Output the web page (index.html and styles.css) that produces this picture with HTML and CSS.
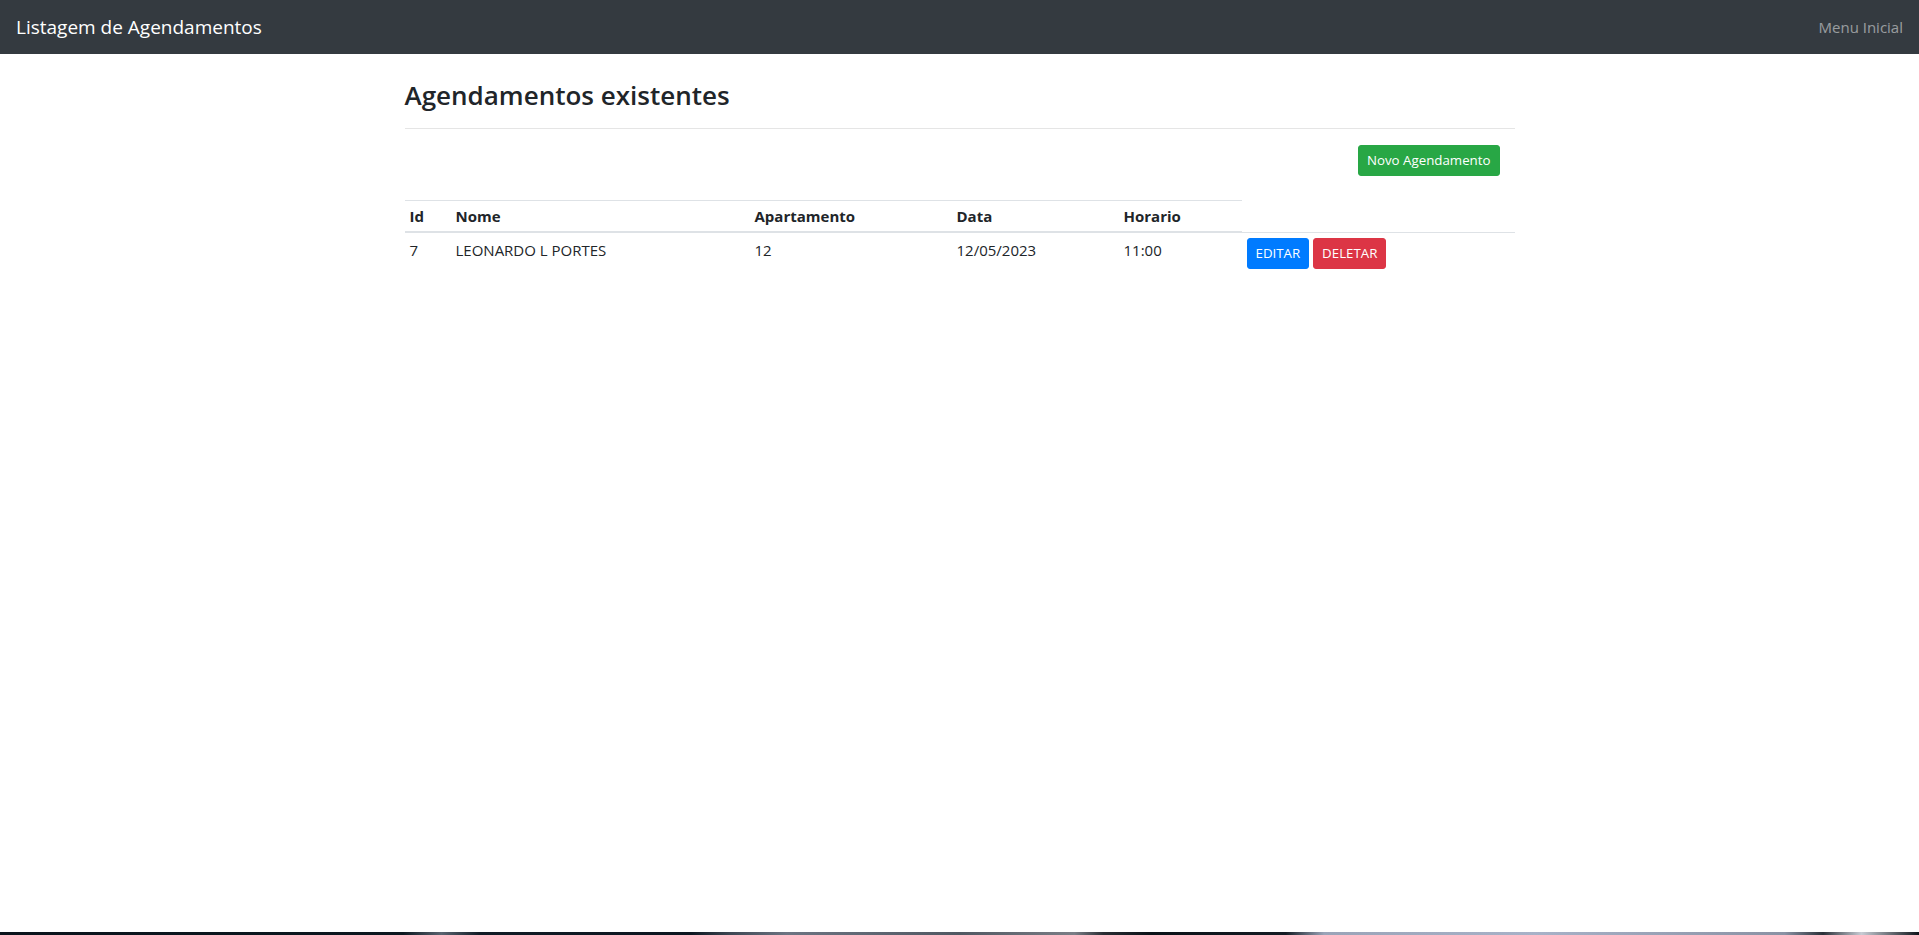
FILE: index.html
```html
<!DOCTYPE html>
<html lang="pt-BR">
<head>
<meta charset="utf-8">
<title>Listagem de Agendamentos</title>
<link rel="stylesheet" href="styles.css">
</head>
<body>
<nav class="navbar">
  <a class="brand" href="#">Listagem de Agendamentos</a>
  <a class="nav-link" href="#">Menu Inicial</a>
</nav>
<main class="page">
  <div class="container">
    <h3 class="title">Agendamentos existentes</h3>
    <hr class="divider">
    <div class="toolbar">
      <a class="btn btn-sm btn-success" href="#">Novo Agendamento</a>
    </div>
    <table class="table">
      <colgroup>
        <col class="c-id"><col class="c-nome"><col class="c-apto"><col class="c-data"><col class="c-hora"><col class="c-acoes">
      </colgroup>
      <thead>
        <tr>
          <th>Id</th>
          <th>Nome</th>
          <th>Apartamento</th>
          <th>Data</th>
          <th>Horario</th>
        </tr>
      </thead>
      <tbody>
        <tr>
          <td>7</td>
          <td>LEONARDO L PORTES</td>
          <td>12</td>
          <td>12/05/2023</td>
          <td>11:00</td>
          <td class="actions"><a class="btn btn-sm btn-primary" href="#">EDITAR</a> <a class="btn btn-sm btn-danger" href="#">DELETAR</a></td>
        </tr>
      </tbody>
    </table>
  </div>
</main>
<div class="taskbar"></div>
</body>
</html>
```

FILE: styles.css
```css
html, body {
  margin: 0;
  padding: 0;
}
body {
  min-height: 100vh;
  display: flex;
  flex-direction: column;
  font-family: "Open Sans", "Noto Sans", sans-serif;
  font-size: 15px;
  line-height: 24px;
  color: #212529;
  background: #fff;
}
a { text-decoration: none; }

.navbar {
  height: 54px;
  box-sizing: border-box;
  padding: 0 16px;
  background: #343a40;
  display: flex;
  align-items: center;
  justify-content: space-between;
}
.brand {
  color: #fff;
  font-size: 19px;
  line-height: 30px;
}
.nav-link {
  color: rgba(255, 255, 255, 0.5);
  font-size: 15px;
  line-height: 24px;
}

.page { flex: 1; }
.container {
  max-width: 1110px;
  margin: 0 auto;
  padding: 0 15px;
}
.title {
  margin: 24px 0 0;
  font-size: 26px;
  line-height: 34px;
  font-weight: 600;
}
.divider {
  margin: 16px 0 0;
  border: 0;
  border-top: 1px solid rgba(0, 0, 0, 0.1);
  height: 0;
}
.toolbar {
  display: flex;
  justify-content: flex-end;
  padding-right: 15px;
  margin: 16px 0 24px;
}

.btn {
  display: inline-block;
  box-sizing: border-box;
  color: #fff;
  border: 1px solid transparent;
  border-radius: 3px;
  vertical-align: middle;
}
.btn-sm {
  padding: 4px 8px;
  font-size: 13.3px;
  line-height: 21px;
}
.btn-success { background: #28a745; border-color: #28a745; }
.btn-primary { background: #007bff; border-color: #007bff; }
.btn-danger { background: #dc3545; border-color: #dc3545; }

.table {
  width: 100%;
  table-layout: fixed;
  border-collapse: collapse;
}
.c-id { width: 46px; }
.c-nome { width: 299px; }
.c-apto { width: 202px; }
.c-data { width: 167px; }
.c-hora { width: 123px; }
.c-acoes { width: 273px; }
.table th {
  text-align: left;
  font-weight: 700;
  padding: 3px 5px;
  vertical-align: bottom;
  border-top: 1px solid #dee2e6;
  border-bottom: 2px solid #dee2e6;
}
.table td {
  padding: 5px;
  vertical-align: top;
  border-top: 1px solid #dee2e6;
}

.taskbar {
  height: 3px;
  flex: none;
  background: linear-gradient(90deg,
    #0a141c 0%, #0c1820 21%, #5a6470 23%, #111c26 25%,
    #0c1620 36%, #3c4652 38%, #6c7482 41%, #505862 50%, #7a7e86 56%, #2a2e34 57.5%,
    #0a1218 60%, #141c24 67%, #9aa4b8 69%, #a8b2c8 80%, #8a92a4 93%, #2a3038 95%, #c8ccd4 97%, #0e141a 100%);
}
```
